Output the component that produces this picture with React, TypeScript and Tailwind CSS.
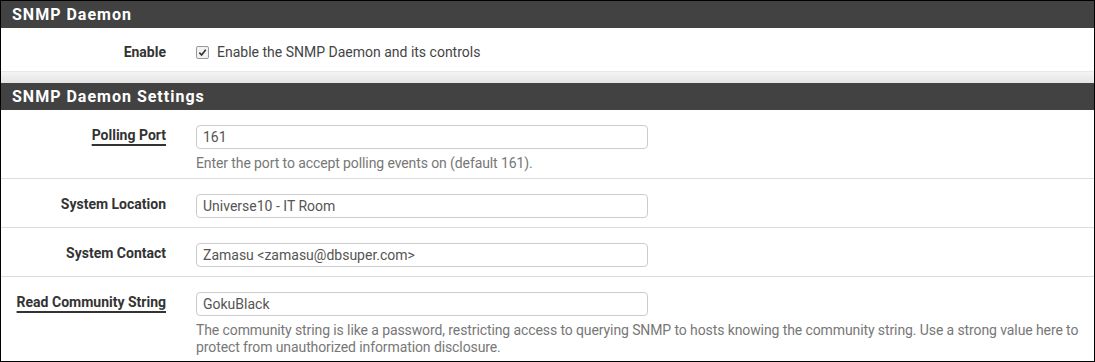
import React from 'react';

type Row = {
  label: string;
  value: string;
  help?: string;
  underline?: boolean;
  height: string;
};

const rows: Row[] = [
  {
    label: 'Polling Port',
    value: '161',
    help: 'Enter the port to accept polling events on (default 161).',
    underline: true,
    height: 'h-[69px]',
  },
  { label: 'System Location', value: 'Universe10 - IT Room', height: 'h-[49px]' },
  { label: 'System Contact', value: 'Zamasu <zamasu@dbsuper.com>', height: 'h-[49px]' },
  {
    label: 'Read Community String',
    value: 'GokuBlack',
    help:
      'The community string is like a password, restricting access to querying SNMP to hosts knowing the community string. Use a strong value here to protect from unauthorized information disclosure.',
    underline: true,
    height: 'flex-1',
  },
];

const Header = ({ title }: { title: string }) => (
  <div className="h-[27px] bg-[#424242] flex items-center px-[11px] text-white font-bold text-[16px] tracking-[1px]">
    {title}
  </div>
);

export default function App() {
  return (
    <div
      className="w-[1095px] h-[362px] border border-black bg-white flex flex-col overflow-hidden text-[14px]"
      style={{ fontFamily: 'Roboto, "Liberation Sans", sans-serif' }}
    >
      <Header title="SNMP Daemon" />
      <div className="h-[43px] flex items-center pt-[5px]">
        <div className="w-[165px] text-right font-bold text-[#333]">Enable</div>
        <div className="ml-[30px] flex items-center gap-[8px] text-[#444]">
          <span className="w-[13px] h-[13px] border border-[#999] rounded-[2px] bg-[#f2f2f2] flex items-center justify-center">
            <svg viewBox="0 0 10 10" className="w-[9px] h-[9px]">
              <path d="M1.5 5.2 L4 7.8 L8.6 2" fill="none" stroke="#333" strokeWidth="1.8" />
            </svg>
          </span>
          <span>Enable the SNMP Daemon and its controls</span>
        </div>
      </div>
      <div className="h-[12px] bg-gradient-to-b from-[#f4f4f4] to-[#e4e4e4] border-t border-[#e8e8e8]" />
      <Header title="SNMP Daemon Settings" />
      {rows.map((row, i) => (
        <div
          key={row.label}
          className={`${row.height} flex pt-[15px] ${i < rows.length - 1 ? 'border-b border-[#dcdcdc]' : ''}`}
        >
          <div className="w-[165px] text-right font-bold text-[#333] shrink-0 leading-[20px]">
            <span className={row.underline ? 'underline decoration-[1.5px] underline-offset-[4px]' : ''}>
              {row.label}
            </span>
          </div>
          <div className="ml-[30px] flex-1">
            <div className="w-[452px] h-[24px] border border-[#ccc] rounded-[4px] flex items-center px-[6px] text-[#555]">
              {row.value}
            </div>
            {row.help && (
              <p className="mt-[6px] text-[#777] leading-[17px] tracking-[-0.1px]">{row.help}</p>
            )}
          </div>
        </div>
      ))}
    </div>
  );
}
